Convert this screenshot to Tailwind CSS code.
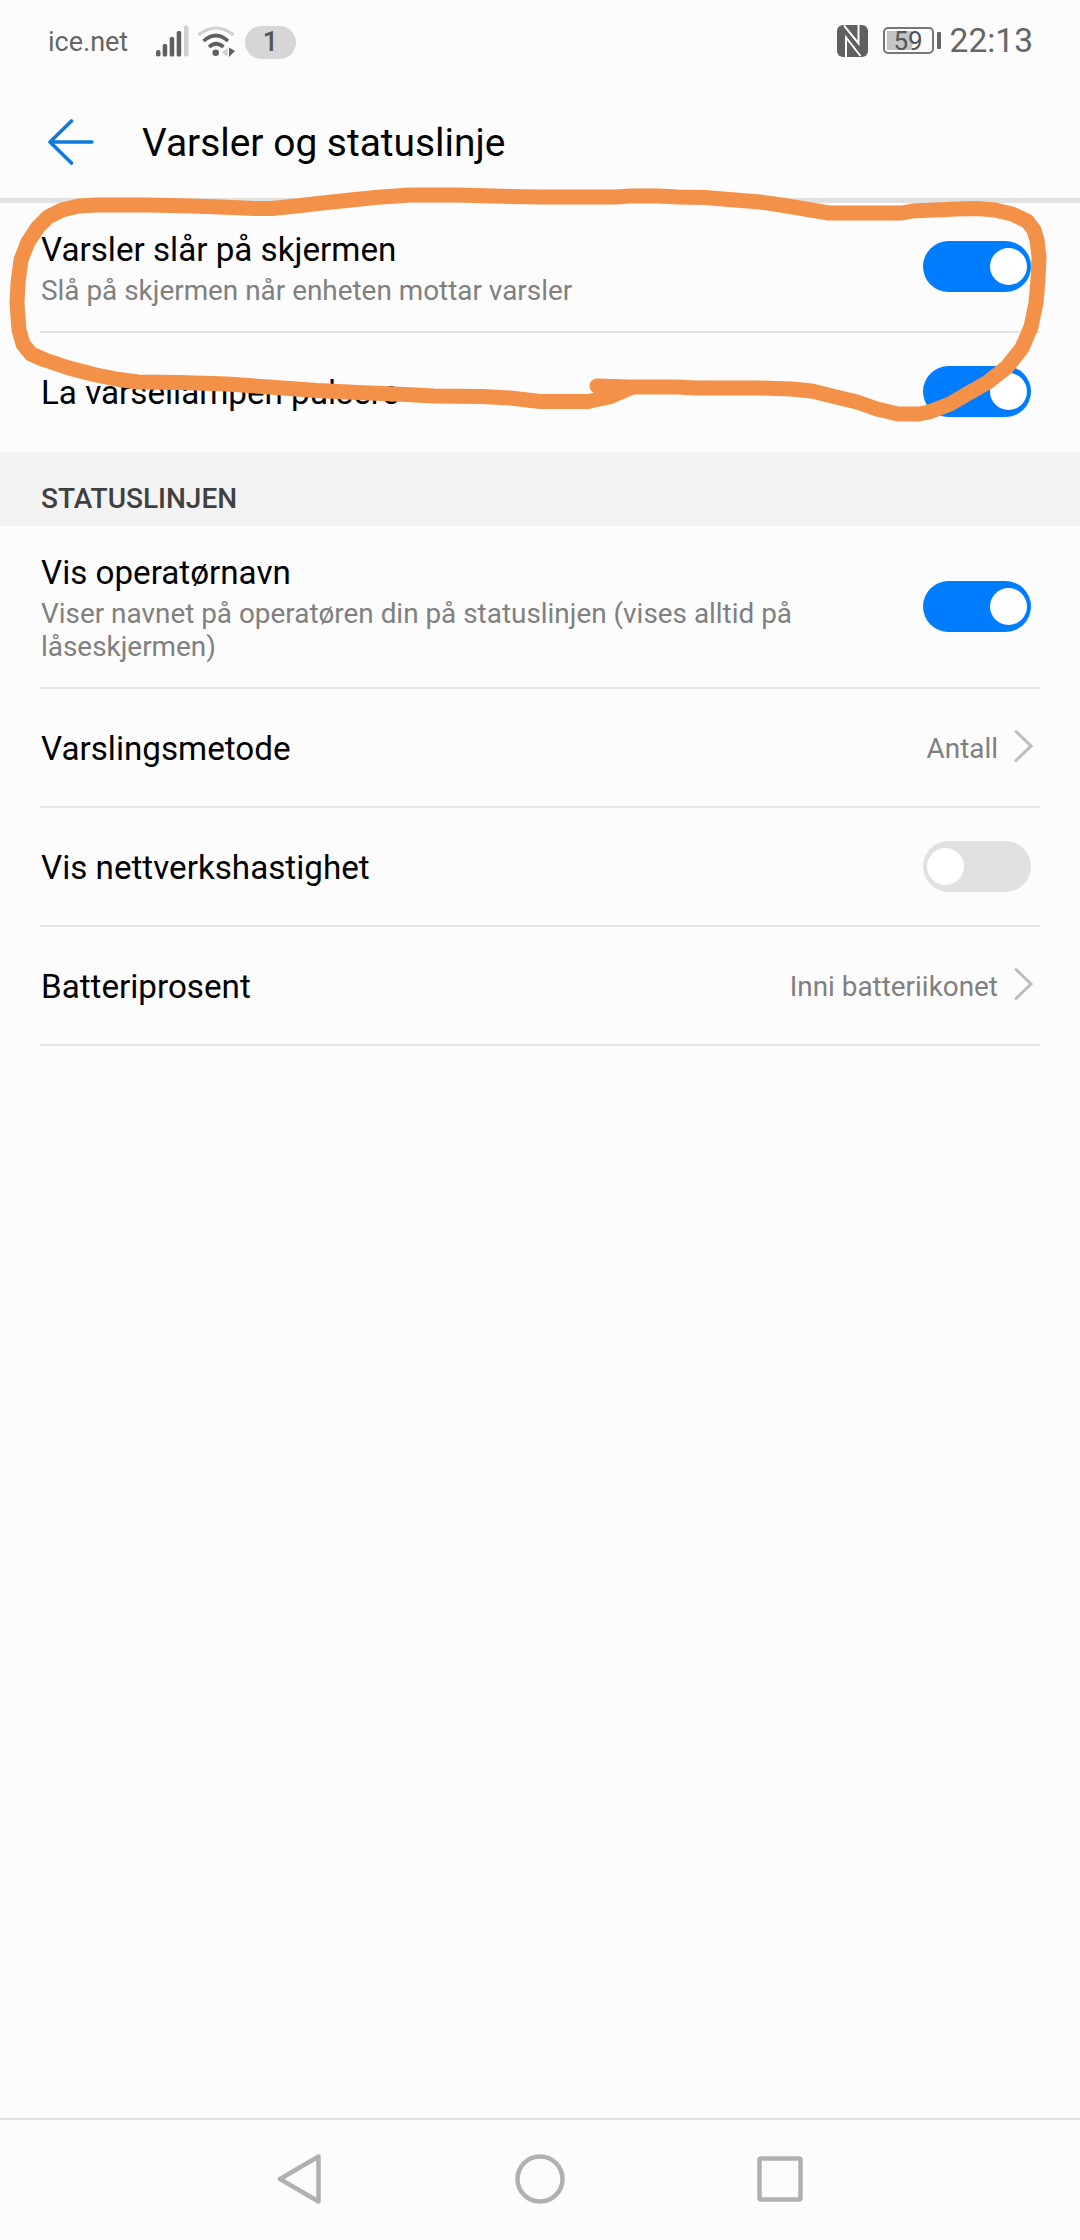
<!DOCTYPE html>
<html lang="no">
<head>
  <meta charset="UTF-8" />
  <title>Varsler og statuslinje</title>
  <script src="https://cdn.jsdelivr.net/npm/@tailwindcss/browser@4"></script>
</head>
<body class="bg-[#fcfcfc] text-black font-[Roboto,sans-serif]">
  <div class="relative w-[1080px] h-[2240px] flex flex-col overflow-hidden">

    <!-- Status bar -->
    <div class="h-[84px] flex items-center justify-between pl-12 pr-[47px] text-[#666]">
      <div class="flex items-center">
        <span class="w-[108px] text-[27px] leading-none">ice.net</span>
        <svg class="w-[34px] h-[32px] -mt-[3px]" viewBox="157 24 34 32" fill="#606060">
          <rect x="157" y="49" width="4.5" height="6.5" rx="2" />
          <rect x="163.7" y="43" width="4.5" height="12.5" rx="1.5" />
          <rect x="170.7" y="36" width="4.5" height="19.5" rx="1.5" />
          <rect x="177.7" y="30" width="4.5" height="25.5" rx="1.5" />
          <rect x="185" y="24.5" width="4.5" height="31" rx="1.5" fill="#d0d0d0" />
        </svg>
        <svg class="w-[40px] h-[34px] ml-[7px] -mt-[3px]" viewBox="198 23 40 34" fill="none" stroke-width="3.6">
          <path d="M199.500 34Q217 20 234.500 34" stroke="#d0d0d0" stroke-width="3" />
          <path d="M204.500 40Q217 29 229 40" stroke="#606060" />
          <path d="M210 46Q217 39.500 224.500 46" stroke="#606060" />
          <circle cx="216.700" cy="51.700" r="3.300" fill="#606060" />
          <path d="M228.500 47v9l-5.500-4.500z" fill="#d0d0d0" />
          <path d="M230 46.500v9.500l6-6z" fill="#606060" />
        </svg>
        <span class="ml-[8px] w-[51px] h-[33px] rounded-full bg-[#d6d6d6] text-[#555] text-[27px] font-medium flex items-center justify-center">1</span>
      </div>
      <div class="flex items-center">
        <svg class="w-[31px] h-[32px] -mt-[3px]" viewBox="0 0 31 32">
          <rect width="31" height="32" rx="6" fill="#606060" />
          <path d="M7 0.500L21.500 18.500V0M9 32V12.500L23.500 31" fill="none" stroke="#fcfcfc" stroke-width="2" />
        </svg>
        <div class="relative ml-[15px] w-[51px] h-[27px] -mt-[3px] border-2 border-[#777] rounded-[5px] p-[2px]">
          <div class="w-[25px] h-full bg-[#c4c4c4]"></div>
          <span class="absolute inset-0 flex items-center justify-center text-[26px] leading-none text-[#555]">59</span>
        </div>
        <div class="ml-[3px] -mt-[3px] w-[4px] h-[17px] rounded-[1px] bg-[#666]"></div>
        <span class="ml-[9px] -mt-[2px] text-[33.500px] leading-none">22:13</span>
      </div>
    </div>

    <!-- Title bar -->
    <header class="h-[119px] flex items-center border-b-[5px] border-[#e1e1e1] pl-[47px]">
      <svg class="w-[48px] h-[48px]" viewBox="0 0 48 48" fill="none" stroke="#0f79de" stroke-width="3.600" stroke-linecap="round" stroke-linejoin="round">
        <path d="M24.500 4L3 25L24.500 46M3 25H45" />
      </svg>
      <h1 class="ml-[47px] mt-[5px] text-[38.900px] leading-none">Varsler og statuslinje</h1>
    </header>

    <main class="flex-1">
      <div class="mx-10 h-[130px] border-b-2 border-[#e4e4e4] flex items-center justify-between pl-px pr-[9px]">
        <div class="pt-[5px]">
          <p class="text-[33.200px] leading-[42px]">Varsler slår på skjermen</p>
          <p class="text-[27.900px] leading-[39px] text-[#808080]">Slå på skjermen når enheten mottar varsler</p>
        </div>
        <div class="w-[108px] h-[51px] -mt-[1px] rounded-full bg-[#007dff] flex items-center justify-end pr-[4px]">
          <div class="size-[37px] rounded-full bg-white"></div>
        </div>
      </div>

      <div class="mx-10 h-[119px] flex items-center justify-between pl-px pr-[9px]">
        <p class="text-[33.200px] pt-px">La varsellampen pulsere</p>
        <div class="w-[108px] h-[51px] -mt-[2px] rounded-full bg-[#007dff] flex items-center justify-end pr-[4px]">
          <div class="size-[37px] rounded-full bg-white"></div>
        </div>
      </div>

      <h2 class="h-[74px] bg-[#f3f3f3] px-[41px] pt-[19px] flex items-center text-[28px] leading-none font-medium text-[#404040]">STATUSLINJEN</h2>

      <div class="mx-10 h-[163px] border-b-2 border-[#e4e4e4] flex items-center justify-between pl-px pr-[9px]">
        <div class="w-[800px] pt-[2px]">
          <p class="text-[33.200px] leading-[42px]">Vis operatørnavn</p>
          <p class="text-[27.900px] leading-[33px] text-[#808080] pt-[3px]">Viser navnet på operatøren din på statuslinjen (vises alltid på låseskjermen)</p>
        </div>
        <div class="w-[108px] h-[51px] rounded-full bg-[#007dff] flex items-center justify-end pr-[4px]">
          <div class="size-[37px] rounded-full bg-white"></div>
        </div>
      </div>

      <div class="mx-10 h-[119px] border-b-2 border-[#e4e4e4] flex items-center justify-between pl-px pr-[7px]">
        <p class="text-[33.200px] pt-[2px]">Varslingsmetode</p>
        <div class="flex items-center">
          <span class="text-[27.900px] text-[#808080] pt-[2px]">Antall</span>
          <svg class="ml-[15px] w-[20px] h-[34px] -mt-[2px]" viewBox="0 0 20 34" fill="none" stroke="#bdbdbd" stroke-width="3" stroke-linecap="round">
            <path d="M3 2.500L18 17L3 31.500" />
          </svg>
        </div>
      </div>

      <div class="mx-10 h-[119px] border-b-2 border-[#e4e4e4] flex items-center justify-between pl-px pr-[9px]">
        <p class="text-[33.200px] pt-[2px]">Vis nettverkshastighet</p>
        <div class="w-[108px] h-[51px] rounded-full bg-[#e1e1e1] flex items-center pl-[4px]">
          <div class="size-[37px] rounded-full bg-white"></div>
        </div>
      </div>

      <div class="mx-10 h-[119px] border-b-2 border-[#e4e4e4] flex items-center justify-between pl-px pr-[7px]">
        <p class="text-[33.200px] pt-[2px]">Batteriprosent</p>
        <div class="flex items-center">
          <span class="text-[27.900px] text-[#808080] pt-[2px]">Inni batteriikonet</span>
          <svg class="ml-[15px] w-[20px] h-[34px] -mt-[2px]" viewBox="0 0 20 34" fill="none" stroke="#bdbdbd" stroke-width="3" stroke-linecap="round">
            <path d="M3 2.500L18 17L3 31.500" />
          </svg>
        </div>
      </div>
    </main>

    <!-- Navigation keys -->
    <nav class="h-[122px] pb-[2px] border-t-2 border-[#e1e1e1] flex items-center justify-center gap-[190px]">
      <svg class="size-[50px]" viewBox="0 0 50 50" fill="none" stroke="#b0b0b0" stroke-width="4.500" stroke-linejoin="round">
        <path d="M43.500 2.500V47.500L5 25Z" />
      </svg>
      <svg class="size-[50px]" viewBox="0 0 50 50" fill="none" stroke="#b0b0b0" stroke-width="4.500">
        <circle cx="25" cy="25" r="22.500" />
      </svg>
      <svg class="size-[50px]" viewBox="0 0 50 50" fill="none" stroke="#b0b0b0" stroke-width="4.500">
        <rect x="4.500" y="4.500" width="41" height="41" rx="1.500" />
      </svg>
    </nav>

    <!-- Hand-drawn marker ring -->
    <svg class="absolute left-0 top-0 w-[1080px] h-[440px]" viewBox="0 0 1080 440" fill="none" stroke="#f39149" stroke-width="15" stroke-linecap="round" stroke-linejoin="round">
      <path d="M597 386L630 387L678 387L695 388L760 388L791 389L812 391L836 397L857 402L877 409L898 414L919 414L929 412L950 404L967 394L988 382L1007 367L1022 348L1031 327L1036 303L1038 280L1039 257L1037 240L1034 230L1027 221L1012 214L995 210L977 208.500L957 209L912 211L902 213L829 213L781 205L760 202L729 199.500L705 197.500L678 197L659 196L630 196L616 197L540 197L510 196.500L458 195L410 195L375 197.500L351 200L327 202.500L296 206L272 208.500L255 208.500L220 207L191 206L148 205L127 205L96 205L79 206L62 210L48 217L38 227L28 242L21 260L18 283L17 303L19 330L23 344L31 354L45 360L69 368L96 375L119 379.500L138 382L179 382.500L227 384L269 387L317 390.500L358 392.500L406 394.500L434 396L482 396.500L510 398L540 401.500L588 401.500L609 397L623 391L630 388" />
    </svg>
  </div>
</body>
</html>
